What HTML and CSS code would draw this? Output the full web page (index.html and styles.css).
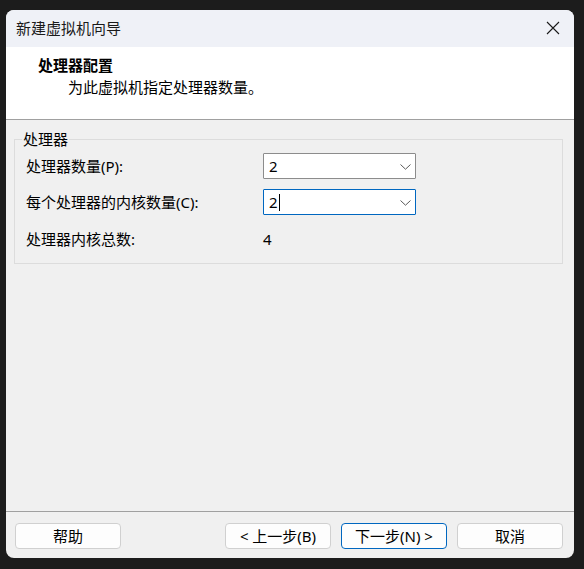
FILE: index.html
```html
<!DOCTYPE html>
<html lang="zh-CN">
<head>
<meta charset="utf-8">
<title>新建虚拟机向导</title>
<link rel="stylesheet" href="styles.css">
</head>
<body>
<div class="window">
  <div class="titlebar">
    <span class="title">新建虚拟机向导</span>
    <svg class="close" width="14" height="14" viewBox="0 0 14 14"><path d="M1 1 L13 13 M13 1 L1 13" stroke="#1a1a1a" stroke-width="1.1" fill="none"/></svg>
  </div>
  <div class="header">
    <div class="h-title">处理器配置</div>
    <div class="h-sub">为此虚拟机指定处理器数量。</div>
  </div>
  <div class="content">
    <fieldset class="group">
      <legend class="legend">处理器</legend>
      <div class="grid">
        <div class="label">处理器数量(P):</div>
        <div class="combo">
          <span class="value">2</span>
          <svg class="chev" width="11" height="6" viewBox="0 0 11 6"><path d="M0.5 0.5 L5.5 5.2 L10.5 0.5" stroke="#5a5a5a" stroke-width="1" fill="none"/></svg>
        </div>
        <div class="label">每个处理器的内核数量(C):</div>
        <div class="combo focused">
          <span class="value">2<span class="caret"></span></span>
          <svg class="chev" width="11" height="6" viewBox="0 0 11 6"><path d="M0.5 0.5 L5.5 5.2 L10.5 0.5" stroke="#5a5a5a" stroke-width="1" fill="none"/></svg>
        </div>
        <div class="label">处理器内核总数:</div>
        <div class="total">4</div>
      </div>
    </fieldset>
  </div>
  <div class="footer">
    <button class="btn">帮助</button>
    <div class="spacer"></div>
    <button class="btn">&lt; 上一步(B)</button>
    <button class="btn default">下一步(N) &gt;</button>
    <button class="btn">取消</button>
  </div>
</div>
</body>
</html>
```
FILE: styles.css
```css
* { box-sizing: border-box; }
html, body { margin: 0; padding: 0; }
body {
  width: 584px;
  height: 569px;
  background: #1c1c1c;
  padding: 10px 10px 11px 6px;
  font-family: "Noto Sans", "Noto Sans CJK SC", sans-serif;
  font-size: 15px;
  color: #000;
}
.window {
  width: 568px;
  height: 548px;
  background: #f0f0f0;
  border-radius: 8px;
  overflow: hidden;
  display: flex;
  flex-direction: column;
}
.titlebar {
  height: 37px;
  background: #eff1f7;
  display: flex;
  align-items: center;
  justify-content: space-between;
  padding: 0 14px 2px 10px;
}
.title { line-height: 20px; color: #1a1a1a; }
.close { display: block; margin-top: 1px; }
.header {
  height: 73px;
  background: #fff;
  border-bottom: 1px solid #a0a0a0;
  padding: 8px 0 0 32px;
}
.h-title { font-weight: 700; line-height: 20px; }
.h-sub { line-height: 20px; margin-top: 2px; padding-left: 30px; }
.content {
  flex: 1;
  padding: 9px 11px 0 8px;
}
.group {
  margin: 0;
  padding: 4px 13px 12px 11px;
  border: 1px solid #dcdcdc;
  min-width: 0;
}
.legend {
  margin-left: -4px;
  padding: 0 1px;
  line-height: 20px;
}
.grid {
  display: grid;
  grid-template-columns: 237px 153px;
  grid-template-rows: 26px 26px 26px;
  row-gap: 10px;
  align-items: center;
}
.grid > :nth-child(5), .grid > :nth-child(6) { margin-top: 1px; }
.label { line-height: 20px; }
.combo {
  height: 26px;
  background: #fff;
  border: 1px solid #8c8c8c;
  border-radius: 1px;
  display: flex;
  align-items: center;
  justify-content: space-between;
  padding: 0 4px 0 5px;
}
.combo.focused { border-color: #0067c0; }
.value { line-height: 20px; display: flex; align-items: center; }
.caret {
  display: inline-block;
  width: 1px;
  height: 17px;
  background: #000;
  margin-left: 1px;
}
.chev { display: block; margin-top: 1px; }
.total { padding-left: 0; line-height: 20px; }
.footer {
  border-top: 1px solid #a0a0a0;
  padding: 11px 11px 9px 9px;
  display: flex;
  gap: 10px;
}
.spacer { flex: 1; }
.btn {
  width: 106px;
  height: 26px;
  background: #fdfdfd;
  border: 1px solid #d0d0d0;
  border-radius: 4px;
  font: inherit;
  color: #000;
  line-height: 20px;
  padding: 0;
}
.btn.default { border-color: #0067c0; }
```
